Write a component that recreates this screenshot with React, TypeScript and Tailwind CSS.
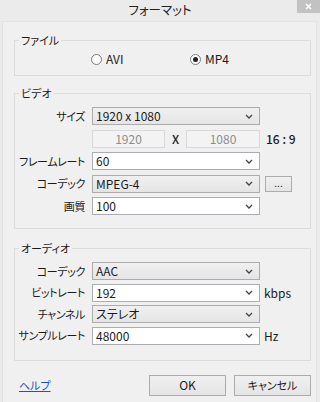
import type { ReactNode } from "react";

function Chevron() {
  return (
    <svg width="8" height="5" viewBox="0 0 8 5" className="shrink-0">
      <path d="M1 1 L4 4 L7 1" fill="none" stroke="#444" strokeWidth="1.3" />
    </svg>
  );
}

function Combo({ value, editable }: { value: string; editable?: boolean }) {
  return (
    <div
      className={
        editable
          ? "flex h-[18px] w-[168px] items-center justify-between border border-[#abadb3] bg-white pl-[3px] pr-[6px]"
          : "flex h-[18px] w-[168px] items-center justify-between border border-[#acacac] bg-linear-to-b from-[#f0f0f0] to-[#e5e5e5] pl-[3px] pr-[6px]"
      }
    >
      <span>{value}</span>
      <Chevron />
    </div>
  );
}

function Row({ label, children }: { label: string; children: ReactNode }) {
  return (
    <div className="flex h-[18px] items-center">
      <div className="w-[70px] whitespace-nowrap text-right text-[11px] tracking-[-0.4px]">{label}</div>
      <div className="ml-[7px] flex items-center">{children}</div>
    </div>
  );
}

function Group({ title, children, className }: { title: string; children: ReactNode; className: string }) {
  return (
    <fieldset className={"ml-[11px] mr-[5px] border border-[#dcdcdc] p-0 " + className}>
      <legend className="ml-[4px] px-[2px] text-[11px] leading-[14px]">{title}</legend>
      {children}
    </fieldset>
  );
}

function Radio({ label, checked }: { label: string; checked?: boolean }) {
  return (
    <div className="flex items-center gap-[4px]">
      <div className="flex h-[11px] w-[11px] items-center justify-center rounded-full border border-[#7a7a7a] bg-white">
        {checked && <div className="h-[5px] w-[5px] rounded-full bg-[#222]" />}
      </div>
      <span>{label}</span>
    </div>
  );
}

export default function App() {
  return (
    <div className="flex h-[402px] w-[320px] flex-col bg-[#ebebeb] font-['Noto_Sans_CJK_JP','Liberation_Sans',sans-serif] text-[12px] text-[#1b1b1b] [font-feature-settings:'palt']">
      {/* タイトルバー */}
      <div className="relative flex h-[21px] shrink-0 items-center justify-center text-[12.5px] text-[#222]">
        フォーマット
        <div className="absolute right-0 top-0 flex h-[13px] w-[23px] items-center justify-center bg-[#c2c2c2]">
          <svg width="7" height="7" viewBox="0 0 7 7">
            <path d="M1 1 L6 6 M6 1 L1 6" stroke="#fff" strokeWidth="1.6" />
          </svg>
        </div>
      </div>

      <div className="mx-[2px] mr-[3px] flex flex-1 flex-col border-l border-t border-r border-[#e2e2e2] bg-[#f0f0f0] pt-[11px]">
        <Group title="ファイル" className="">
          <div className="flex pb-[7px] pl-[76px] pt-[3px]">
            <div className="w-[99px]">
              <Radio label="AVI" />
            </div>
            <Radio label="MP4" checked />
          </div>
        </Group>

        <Group title="ビデオ" className="mt-[10px]">
          <div className="flex flex-col gap-[4.5px] pb-[13px] pt-[7px]">
            <Row label="サイズ">
              <Combo value="1920 x 1080" />
            </Row>
            <Row label="">
              <div className="flex h-[18px] w-[73px] items-center justify-center border border-[#d9d9d9] bg-[#f3f3f3] text-[#8c8c8c]">
                1920
              </div>
              <span className="w-[21px] text-center font-medium">X</span>
              <div className="flex h-[18px] w-[74px] items-center justify-center border border-[#d9d9d9] bg-[#f3f3f3] text-[#8c8c8c]">
                1080
              </div>
              <span className="ml-[6px] font-medium">16 : 9</span>
            </Row>
            <Row label="フレームレート">
              <Combo value="60" editable />
            </Row>
            <Row label="コーデック">
              <Combo value="MPEG-4" />
              <div className="ml-[5px] flex h-[16px] w-[27px] items-center justify-center border border-[#acacac] bg-linear-to-b from-[#f0f0f0] to-[#e5e5e5] pb-[3px] text-[10px]">
                ...
              </div>
            </Row>
            <Row label="画質">
              <Combo value="100" editable />
            </Row>
          </div>
        </Group>

        <Group title="オーディオ" className="mt-[12px]">
          <div className="flex flex-col gap-[3.5px] pb-[15px] pt-[7px]">
            <Row label="コーデック">
              <Combo value="AAC" />
            </Row>
            <Row label="ビットレート">
              <Combo value="192" editable />
              <span className="ml-[4px]">kbps</span>
            </Row>
            <Row label="チャンネル">
              <Combo value="ステレオ" />
            </Row>
            <Row label="サンプルレート">
              <Combo value="48000" editable />
              <span className="ml-[4px]">Hz</span>
            </Row>
          </div>
        </Group>

        <div className="ml-[16px] mr-[5px] mt-[14px] flex items-center">
          <span className="text-[11px] text-[#1a4fd8] underline">ヘルプ</span>
          <div className="ml-auto flex gap-[8px]">
            <div className="flex h-[21px] w-[77px] items-center justify-center border border-[#acacac] bg-linear-to-b from-[#f0f0f0] to-[#e5e5e5]">
              OK
            </div>
            <div className="flex h-[21px] w-[77px] items-center justify-center border border-[#acacac] bg-linear-to-b from-[#f0f0f0] to-[#e5e5e5] text-[11px]">
              キャンセル
            </div>
          </div>
        </div>
      </div>
    </div>
  );
}
